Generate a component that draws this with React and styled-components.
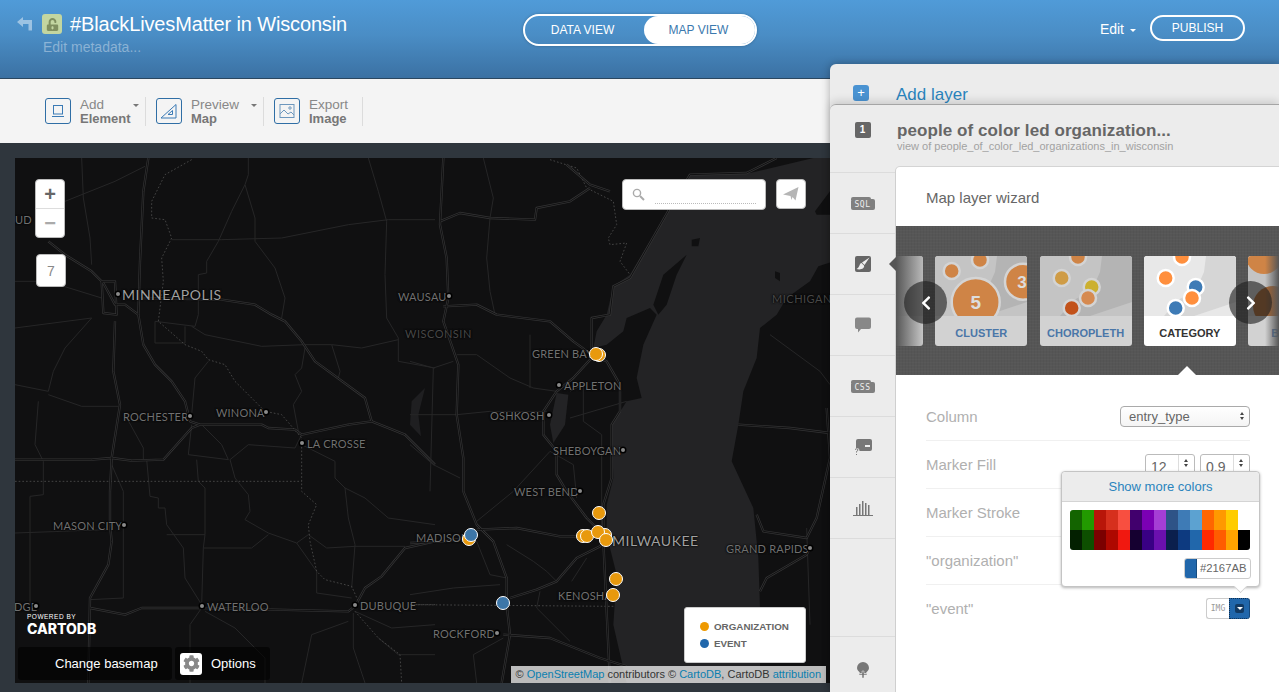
import React from "react";
import styled, { createGlobalStyle } from "styled-components";
import { FaUnlockAlt, FaCog, FaChevronLeft, FaChevronRight } from "react-icons/fa";

const GlobalStyle = createGlobalStyle`
    html, body {
        margin: 0;
        height: 692px;
        overflow: hidden;
        font-family: "Liberation Sans", Arial, sans-serif;
        background: #2f363d;
    }
    * { box-sizing: border-box; }
`;

const Page = styled.div`
    position: relative;
    width: 1279px;
    height: 692px;
    overflow: hidden;
    display: flex;
    flex-direction: column;
`;

/* ---- header ---- */
const Header = styled.header`
    height: 79px;
    flex: none;
    display: flex;
    align-items: flex-start;
    justify-content: space-between;
    background: linear-gradient(180deg, #509bd8 0%, #4a8dc5 45%, #3b71a3 100%);
    border-bottom: 1px solid #2b4760;
    color: white;
`;

const TitleBlock = styled.div`
    width: 523px;
    padding: 14px 0 0 17px;
    display: grid;
    grid-template-columns: 25px 28px 1fr;
    grid-template-rows: 20px auto;
    align-items: center;
`;

const LockBox = styled.div`
    width: 20px;
    height: 20px;
    border-radius: 3px;
    background: #c3d6a0;
    color: #80905f;
    display: flex;
    align-items: center;
    justify-content: center;
    font-size: 13px;
`;

const Title = styled.h1`
    margin: 0;
    font-size: 20px;
    font-weight: normal;
    line-height: 20px;
    letter-spacing: -0.14px;
    white-space: nowrap;
`;

const Metadata = styled.div`
    grid-column: 2 / 4;
    margin: 5px 0 0 1px;
    font-size: 14px;
    color: rgba(255, 255, 255, 0.38);
`;

const ViewSwitch = styled.div`
    margin-top: 14px;
    width: 234px;
    height: 32px;
    border: 2px solid white;
    border-radius: 16px;
    display: flex;
    font-size: 12px;
    box-shadow: 0 0 3px rgba(0, 0, 0, 0.25);
`;

const ViewTab = styled.div`
    flex: ${(p) => (p.$active ? "0 0 111px" : "1")};
    padding-right: ${(p) => (p.$active ? 2 : 4)}px;
    display: flex;
    align-items: center;
    justify-content: center;
    border-radius: 14px;
    background: ${(p) => (p.$active ? "white" : "transparent")};
    color: ${(p) => (p.$active ? "#3b79ae" : "white")};
`;

const HeaderActions = styled.div`
    width: 522px;
    padding: 15px 34px 0 0;
    display: flex;
    justify-content: flex-end;
    align-items: center;
    gap: 14px;
    font-size: 14px;
`;

const EditMenu = styled.span`
    padding-top: 2px;
`;

const Caret = styled.span`
    display: inline-block;
    width: 0;
    height: 0;
    margin-left: ${(p) => p.$gap || 0}px;
    border-left: 3px solid transparent;
    border-right: 3px solid transparent;
    border-top: 3px solid ${(p) => p.$color || "white"};
    vertical-align: middle;
`;

const Publish = styled.div`
    width: 95px;
    height: 26px;
    border: 2px solid white;
    border-radius: 13px;
    font-size: 12px;
    display: flex;
    align-items: center;
    justify-content: center;
`;

/* ---- toolbar ---- */
const Toolbar = styled.div`
    height: 64px;
    flex: none;
    background: #f4f4f4;
    display: flex;
    align-items: center;
    padding-left: 45px;
`;

const ToolItem = styled.div`
    position: relative;
    width: ${(p) => p.$width}px;
    height: 29px;
    margin-right: 10px;
    display: flex;
    align-items: center;
    gap: 9px;
    border-right: 1px solid #dcdcdc;
`;

const ToolIcon = styled.div`
    width: 26px;
    height: 26px;
    border: 1px solid #2f6ea5;
    border-radius: 3px;
    display: flex;
    align-items: center;
    justify-content: center;
`;

const ToolText = styled.div`
    padding-top: 2px;
    font-size: 13.5px;
    line-height: 14px;
    color: #888;
    strong {
        display: block;
        font-size: 13px;
        color: #777;
    }
`;

const ToolCaret = styled.div`
    position: absolute;
    right: 6px;
    top: 7px;
    line-height: 0;
`;

/* ---- map ---- */
const Stage = styled.div`
    flex: 1;
    padding: 15px 0 9px 15px;
    background: #2f363d;
`;

const MapCanvas = styled.div`
    position: relative;
    width: 815px;
    height: 525px;
    overflow: hidden;
    background: #101011;
`;

const MapArt = styled.svg`
    display: block;
    width: 815px;
    height: 525px;
`;

const MapLabel = styled.span`
    position: absolute;
    left: ${(p) => p.$x - 15}px;
    top: ${(p) => p.$y - 158}px;
    transform: translateY(-50%);
    font-family: Lato, sans-serif;
    font-size: ${(p) => p.$size || 11}px;
    letter-spacing: ${(p) => (p.$size ? 0.5 : 0.2)}px;
    color: ${(p) => p.$color || "#707070"};
    text-shadow: 0 0 2px #000, 0 0 2px #000;
    white-space: nowrap;
`;

const MapDot = styled.span`
    position: absolute;
    left: ${(p) => p.$x - 17}px;
    top: ${(p) => p.$y - 160}px;
    width: 4px;
    height: 4px;
    border-radius: 50%;
    background: #8a8a8a;
    box-shadow: 0 0 0 1.5px #000;
`;

const Marker = styled.span`
    position: absolute;
    left: ${(p) => p.$x - 22}px;
    top: ${(p) => p.$y - 165}px;
    width: 14px;
    height: 14px;
    border-radius: 50%;
    border: 1.5px solid white;
    background: ${(p) => (p.$blue ? "#3d76a8" : "#e8990d")};
`;

const ZoomControl = styled.div`
    position: absolute;
    left: 20px;
    top: 21px;
    width: 30px;
    height: 59px;
    background: white;
    border: 1px solid #bbb;
    border-radius: 4px;
    display: flex;
    flex-direction: column;
`;

const ZoomButton = styled.div`
    flex: 1;
    display: flex;
    align-items: center;
    justify-content: center;
    font-size: 20px;
    font-weight: bold;
    line-height: 1;
    color: ${(p) => (p.$muted ? "#aaa" : "#666")};
    & + & {
        border-top: 1px solid #ddd;
    }
`;

const ZoomLevel = styled.div`
    position: absolute;
    left: 21px;
    top: 96px;
    width: 30px;
    height: 33px;
    background: white;
    border: 1px solid #bbb;
    border-radius: 4px;
    display: flex;
    align-items: center;
    justify-content: center;
    font-size: 14px;
    color: #888;
`;

const SearchBox = styled.div`
    position: absolute;
    left: 607px;
    top: 21px;
    width: 144px;
    height: 31px;
    padding: 0 9px;
    background: white;
    border: 1px solid #bbb;
    border-radius: 4px;
    display: flex;
    align-items: center;
    gap: 10px;
`;

const SearchLine = styled.div`
    flex: 1;
    height: 18px;
    border-bottom: 1px dotted #bbb;
`;

const LocateButton = styled.div`
    position: absolute;
    left: 761px;
    top: 21px;
    width: 30px;
    height: 30px;
    background: white;
    border: 1px solid #bbb;
    border-radius: 4px;
    display: flex;
    align-items: center;
    justify-content: center;
`;

const Powered = styled.div`
    position: absolute;
    left: 12px;
    top: 454px;
    color: white;
    small {
        display: block;
        font-size: 6.5px;
        letter-spacing: 0.5px;
        line-height: 9px;
    }
    b {
        display: block;
        font-family: Inter, sans-serif;
        font-size: 14px;
        font-weight: 800;
        line-height: 16px;
    }
`;

const BaseBar = styled.div`
    position: absolute;
    left: 3px;
    top: 489px;
    display: flex;
    gap: 3px;
    color: white;
    font-size: 13px;
`;

const BaseButton = styled.div`
    width: ${(p) => p.$width}px;
    height: 33px;
    border-radius: 3px;
    background: rgba(0, 0, 0, 0.62);
    display: flex;
    align-items: center;
    gap: 9px;
    padding-left: ${(p) => p.$pad}px;
`;

const GearBox = styled.div`
    width: 22px;
    height: 22px;
    background: white;
    border-radius: 3px;
    color: #888;
    font-size: 17px;
    display: flex;
    align-items: center;
    justify-content: center;
`;

const Legend = styled.div`
    position: absolute;
    left: 669px;
    top: 449px;
    width: 122px;
    height: 56px;
    padding: 13px 15px 0;
    background: white;
    border: 1px solid #ccc;
    border-radius: 3px;
    display: flex;
    flex-direction: column;
    gap: 6px;
`;

const LegendRow = styled.div`
    display: flex;
    align-items: center;
    gap: 5px;
    height: 11px;
    font-size: 9.8px;
    font-weight: bold;
    color: #666;
`;

const LegendDot = styled.span`
    width: 9px;
    height: 9px;
    border-radius: 50%;
    background: ${(p) => p.$color};
`;

const Attribution = styled.div`
    position: absolute;
    right: 4px;
    bottom: 0;
    height: 17px;
    padding: 0 5px;
    background: rgba(255, 255, 255, 0.72);
    font-size: 11px;
    line-height: 17px;
    color: #333;
    white-space: nowrap;
    a {
        color: #0a7fb0;
        text-decoration: none;
    }
`;

/* ---- right panel ---- */
const Panel = styled.aside`
    position: absolute;
    left: 830px;
    top: 64px;
    width: 449px;
    height: 628px;
    background: #ececec;
    border-top-left-radius: 6px;
    box-shadow: 0 0 8px rgba(0, 0, 0, 0.3);
    display: flex;
    flex-direction: column;
`;

const AddLayer = styled.div`
    height: 40px;
    flex: none;
    display: flex;
    align-items: flex-start;
    padding: 21px 0 0 23px;
    font-size: 17px;
    line-height: 20px;
    color: #2a84bd;
`;

const AddIcon = styled.div`
    width: 16px;
    height: 16px;
    margin-right: 27px;
    border-radius: 3px;
    background: #4a93d2;
    color: white;
    font-size: 13px;
    line-height: 16px;
    text-align: center;
`;

const LayerCard = styled.div`
    flex: 1;
    display: flex;
    background: #ececec;
    border-top: 1px solid #a5a5a5;
    border-top-left-radius: 6px;
    box-shadow: 0 -3px 8px rgba(0, 0, 0, 0.14);
`;

const Rail = styled.nav`
    position: relative;
    width: 65px;
    flex: none;
    display: flex;
    flex-direction: column;
`;

const RailRow = styled.div`
    height: ${(p) => p.$height || 61}px;
    flex: ${(p) => (p.$grow ? 1 : "none")};
    display: flex;
    justify-content: center;
    align-items: ${(p) => (p.$top ? "flex-start" : "center")};
    padding-top: ${(p) => p.$top || 0}px;
    border-bottom: ${(p) => (p.$last ? "none" : "1px solid #dcdcdc")};
`;

const NumberBadge = styled.div`
    width: 16px;
    height: 16px;
    border-radius: 2px;
    background: #666;
    color: white;
    font-size: 10px;
    font-weight: bold;
    line-height: 16px;
    text-align: center;
`;

const CodeBadge = styled.div`
    position: relative;
    width: 24px;
    height: 11px;
    margin-top: 2px;
    border-radius: 2px;
    background: #808080;
    color: #eee;
    font-family: "DejaVu Sans Mono", monospace;
    font-size: 8px;
    letter-spacing: 0.5px;
    line-height: 11px;
    text-align: center;
    &::before {
        content: "";
        position: absolute;
        left: 0;
        top: -2px;
        width: 20px;
        height: 3px;
        border-radius: 2px 2px 0 0;
        background: #808080;
    }
`;

const RailPointer = styled.div`
    position: absolute;
    right: -1px;
    top: 152px;
    z-index: 2;
    width: 0;
    height: 0;
    border-top: 7px solid transparent;
    border-bottom: 7px solid transparent;
    border-right: 7px solid #565656;
`;

const LayerMain = styled.div`
    flex: 1;
    min-width: 0;
    display: flex;
    flex-direction: column;
`;

const LayerHead = styled.div`
    height: 61px;
    flex: none;
    padding: 16px 0 0 2px;
`;

const LayerName = styled.div`
    font-size: 17px;
    font-weight: bold;
    line-height: 19px;
    letter-spacing: 0.08px;
    color: #666;
`;

const LayerSub = styled.div`
    font-size: 11px;
    line-height: 13px;
    color: #a2a2a2;
`;

const Wizard = styled.section`
    flex: 1;
    position: relative;
    background: white;
    border-top: 1px solid #d4d4d4;
    border-left: 1px solid #cfcfcf;
    border-top-left-radius: 5px;
    display: flex;
    flex-direction: column;
`;

const WizardTitle = styled.div`
    height: 59px;
    flex: none;
    padding: 2px 0 0 30px;
    display: flex;
    align-items: center;
    font-size: 15px;
    color: #666;
`;

const Carousel = styled.div`
    position: relative;
    height: 149px;
    flex: none;
    overflow: hidden;
    padding-top: 30px;
    background:
        repeating-linear-gradient(0deg, rgba(255, 255, 255, 0.02) 0 1px, transparent 1px 3px),
        repeating-linear-gradient(90deg, rgba(0, 0, 0, 0.04) 0 1px, transparent 1px 3px),
        #565656;
`;

const CarouselTrack = styled.div`
    display: flex;
    gap: 12.3px;
    margin-left: -65px;
`;

const TypeCard = styled.div`
    width: 92px;
    height: 90px;
    flex: none;
    overflow: hidden;
    border-radius: 3px;
    background: ${(p) => (p.$active ? "white" : "#d2d2d2")};
`;

const TypeThumb = styled.svg`
    display: block;
    width: 92px;
    height: 60px;
`;

const TypeLabel = styled.div`
    height: 30px;
    overflow: hidden;
    text-align: center;
    font-size: 11px;
    font-weight: bold;
    line-height: 34px;
    color: ${(p) => (p.$active ? "#333" : "#4a76a8")};
`;

const CarouselFade = styled.div`
    position: absolute;
    top: 30px;
    height: 90px;
    width: ${(p) => (p.$right ? 14 : 30)}px;
    ${(p) => (p.$right ? "right: 0;" : "left: 0;")}
    background: linear-gradient(${(p) => (p.$right ? "270deg" : "90deg")}, #565656, rgba(86, 86, 86, 0));
`;

const CarouselArrow = styled.div`
    position: absolute;
    top: 55px;
    ${(p) => (p.$right ? "right: 7px;" : "left: 8px;")}
    width: 43px;
    height: 43px;
    border-radius: 50%;
    background: rgba(30, 30, 30, 0.62);
    color: white;
    font-size: 16px;
    display: flex;
    align-items: center;
    justify-content: center;
`;

const ActiveNotch = styled.div`
    position: absolute;
    left: 282px;
    bottom: 0;
    width: 0;
    height: 0;
    border-left: 9px solid transparent;
    border-right: 9px solid transparent;
    border-bottom: 9px solid white;
`;

const WizardForm = styled.div`
    position: relative;
    flex: 1;
    padding: 18px 29px 0 30px;
`;

const FormRow = styled.div`
    height: 48px;
    display: flex;
    align-items: center;
    justify-content: space-between;
    border-bottom: ${(p) => (p.$last ? "none" : "1px solid #f0f0f0")};
    font-size: 15px;
    color: #b0b0b0;
    padding-bottom: 1px;
`;

const SelectBox = styled.div`
    width: 130px;
    height: 21px;
    padding: 0 5px 0 8px;
    border: 1px solid #aaa;
    border-radius: 4px;
    background: linear-gradient(#fff, #f4f4f4);
    display: flex;
    align-items: center;
    justify-content: space-between;
    font-size: 13px;
    color: #666;
`;

const UpDown = styled.span`
    display: flex;
    flex-direction: column;
    gap: 2px;
    &::before, &::after {
        content: "";
        width: 0;
        height: 0;
        border-left: 2.5px solid transparent;
        border-right: 2.5px solid transparent;
    }
    &::before { border-bottom: 3px solid #444; }
    &::after { border-top: 3px solid #444; }
`;

const Steppers = styled.div`
    display: flex;
    gap: 5px;
    align-self: flex-start;
    margin-top: 13px;
`;

const Stepper = styled.div`
    width: 50px;
    height: 24px;
    border: 1px solid #bbb;
    border-radius: 3px;
    display: flex;
    font-size: 14px;
    line-height: 24px;
    color: #666;
    span:first-child {
        flex: 1;
        padding-left: 5px;
    }
`;

const StepperSide = styled.div`
    width: 16px;
    border-left: 1px solid #ddd;
    display: flex;
    justify-content: center;
    padding-top: 4px;
`;

const ColorPopup = styled.div`
    position: absolute;
    left: 165px;
    top: 96px;
    width: 199px;
    height: 116px;
    background: white;
    border: 1px solid #c4c4c4;
    border-radius: 4px;
    box-shadow: 0 1px 3px rgba(0, 0, 0, 0.3);
    &::after {
        content: "";
        position: absolute;
        right: 12px;
        bottom: -7px;
        width: 12px;
        height: 12px;
        background: white;
        border-right: 1px solid #ccc;
        border-bottom: 1px solid #ccc;
        transform: rotate(45deg) scale(0.7);
    }
`;

const PopupHead = styled.div`
    height: 30px;
    background: #ececec;
    border-bottom: 1px solid #d4d4d4;
    border-radius: 4px 4px 0 0;
    text-align: center;
    font-size: 13px;
    line-height: 30px;
    color: #2a84bd;
`;

const Palette = styled.div`
    margin: 8px 0 0 8px;
    width: 180px;
    display: grid;
    grid-template-columns: repeat(15, 12px);
    grid-auto-rows: 20px;
    border-radius: 3px;
    overflow: hidden;
`;

const Swatch = styled.span`
    background: ${(p) => p.$color};
`;

const HexField = styled.div`
    margin: 8px 0 0 122px;
    width: 67px;
    height: 21px;
    border: 1px solid #ccc;
    border-radius: 3px;
    overflow: hidden;
    display: flex;
    font-size: 11.3px;
    line-height: 19px;
    color: #666;
    span:last-child {
        padding-left: 3px;
    }
`;

const HexChip = styled.span`
    width: 12px;
    flex: none;
    background: #2167ab;
    border-right: 1px solid #174d80;
`;

const ImgPicker = styled.div`
    display: flex;
    width: 44px;
    height: 21px;
`;

const ImgButton = styled.div`
    width: 23px;
    border: 1px solid #ccc;
    border-right: none;
    border-radius: 3px 0 0 3px;
    font-family: "DejaVu Sans Mono", monospace;
    font-size: 8px;
    line-height: 19px;
    text-align: center;
    color: #999;
`;

const ColorButton = styled.div`
    flex: 1;
    background: #2167ab;
    border: 1px dotted #0c2d4f;
    border-radius: 0 3px 3px 0;
    display: flex;
    align-items: center;
    justify-content: center;
`;

const CaretChip = styled.span`
    width: 9px;
    height: 9px;
    border-radius: 2px;
    background: #123a63;
    display: flex;
    align-items: center;
    justify-content: center;
`;

/* ---- map data, in 3x map coordinates ---- */
const leftHighways = [
    "100,250 150,290 230,340 265,375 300,440 330,440 370,470 385,560 420,620 470,670 510,730 525,790 555,800 740,800 760,810 840,815 860,830 1000,800 1070,790",
    "1070,790 1050,720 900,610 860,550 810,490 770,470 720,440 620,425 380,420",
    "300,490 295,640 315,740 290,900 285,1000 285,1100 290,1150 280,1220 225,1320 220,1575",
    "0,905 230,905 290,900 350,908 445,905 530,810 555,800",
    "1070,790 1170,830 1260,920",
    "400,0 385,100 375,310 370,470",
    "225,1350 330,1370 380,1350 560,1350 1000,1360 1020,1345",
    "260,370 300,370 305,470 265,465 260,370",
    "1020,1345 1050,1290 1100,1255 1170,1170 1260,1150",
];

const leftRoads = [
    "150,130 300,70 390,25",
    "200,0 205,120 225,240 230,320",
    "0,370 70,370 130,380 260,420",
    "470,245 620,245 800,240 1000,200 1120,185 1260,185",
    "700,0 700,50 690,80 650,160 610,250 575,310 575,345 550,350 550,470 540,505 420,490 420,555 510,555 510,505",
    "690,80 720,180 720,250 780,330 810,420 800,480",
    "1060,0 1090,100 1115,190 1110,350 1115,480 1150,540 1150,610 1260,630",
    "530,505 570,530 740,565 870,560 950,560 1040,570 1150,545",
    "950,560 975,640 970,660",
    "870,570 860,630 840,650 860,700 835,740 850,820",
    "0,510 230,480 150,570 115,640 100,700 0,680",
    "100,710 200,745 310,745",
    "70,730 60,860 85,910 85,1010 45,1015 45,1340",
    "580,610 540,660 530,770",
    "530,800 520,890 640,905 620,860 560,800",
    "645,905 700,860 840,870 860,830",
    "645,905 660,960 700,1010 705,1060 690,1085 760,1125 845,1155 880,1130 935,1170 1020,1165 1170,1165",
    "860,860 960,910 960,960 990,990 1050,1020 1120,1080 1260,1100",
    "990,990 1000,1080 1020,1160 1010,1290",
    "395,905 405,1015 430,1020 430,1050 450,1050 455,1100 505,1170 510,1260 560,1340",
    "545,905 550,970 570,990 570,1130 565,1170 560,1340",
    "565,1170 710,1170 760,1130",
    "0,1125 280,1115",
    "455,1130 570,1130",
    "290,920 325,1000 325,1320 225,1325",
    "330,770 385,870 385,905",
    "845,1155 905,1240 905,1305 1010,1320",
    "560,1350 525,1400 525,1575",
    "570,1360 660,1410 750,1500 750,1575",
    "1015,1365 1015,1470 1050,1575",
    "1020,1360 1130,1410 1260,1400",
    "860,1575 890,1430 1000,1390",
    "1090,1440 1150,1490 1260,1490",
];

const leftDotted = [
    "530,5 450,50 410,130 410,180 450,185 470,240 440,300 445,370 430,490 510,560 560,580 580,605 630,620 660,670 750,760 800,770 860,840 860,1000 905,1040 880,1100 885,1150 905,1240 930,1265 1010,1285 1030,1330",
    "0,970 860,970",
    "1020,1360 1090,1440 1155,1490 1160,1575",
    "1190,1340 1260,1340",
];

const rightHighways = [
    "100,0 90,200 110,300 115,420 100,490 145,620 140,770 160,900 160,1000 200,1100 250,1150 290,1260 290,1340 300,1430 275,1575",
    "90,190 150,165 240,180 375,185 380,150 480,130 540,90",
    "470,20 540,80 600,100",
    "100,445 200,440 260,470 420,490 490,550 545,590 545,480 600,470 610,385 660,360 780,150 840,50 1010,45 1100,0",
    "545,590 590,610 630,680 630,760 605,800 605,960 580,1040 580,1150 600,1575",
    "545,600 490,660 440,700 400,760 400,830 440,880 440,950 470,1000 530,1080 580,1130",
    "200,1115 320,1110 450,1135 510,1135",
    "0,1155 100,1150 170,1140",
    "300,1320 380,1295 440,1270 500,1200 570,1165 580,1150",
    "280,1430 420,1440 570,1500 650,1525",
    "1040,1070 1060,1120 1190,1140 1220,1080 1260,900 1250,750",
    "985,800 1140,810 1260,825",
    "1050,1300 1070,1260 1190,1190 1200,1170",
];

const rightRoads = [
    "220,0 250,120 240,180 230,300 240,400 255,470",
    "0,610 70,630 130,610",
    "70,630 60,1000",
    "140,590 200,590 300,660 370,690 440,700",
    "360,530 360,690",
    "0,770 140,770 240,760 410,760",
    "0,860 70,920 150,960",
    "480,700 520,680 520,790 575,830 575,1150",
    "480,780 650,730",
    "200,1090 310,1000 420,880 490,920 500,1020",
    "200,1150 240,1250 290,1260",
    "290,1160 370,1210 410,1240 440,1270",
    "485,1270 530,1200",
    "390,1300 380,1350 480,1450",
    "0,1310 130,1290 270,1280",
    "200,1575 190,1490 280,1440",
    "1080,530 1230,640 1260,680",
    "1190,1110 1200,1400",
];

const rightDotted = [
    "420,5 500,30 530,90 610,130 620,200 595,240 600,260 650,255 630,310 660,350",
    "0,1340 610,1345",
];

const lakeShape =
    "780,150 840,50 1020,45 1210,0 1300,0 1300,300 1225,325 1200,370 1130,420 1100,470 1050,510 1040,600 1000,700 985,800 965,910 1030,1050 1045,1200 1050,1350 1050,1575 650,1575 610,1400 620,1250 590,1130 590,1040 610,960 605,800 650,730 695,720 680,660 700,560 740,470 720,450 650,480 640,520 590,560 550,570 560,520 590,470 610,385 660,350";

const islands = [
    "730,440 760,350 830,290 800,350 770,440 745,470",
    "845,245 870,240 865,265 845,265",
    "1095,340 1110,345 1110,370 1095,360",
    "1215,160 1260,100 1260,170 1220,170",
];

const labels = [
    { text: "MINNEAPOLIS", x: 122, y: 294, size: 14, color: "#a0a0a0", dot: 118 },
    { text: "WAUSAU", x: 398, y: 296, dot: 449 },
    { text: "WISCONSIN", x: 405, y: 333, size: 11, color: "#484848" },
    { text: "MICHIGAN", x: 772, y: 298, size: 11, color: "#484848" },
    { text: "GREEN BAY", x: 532, y: 353 },
    { text: "APPLETON", x: 564, y: 385, dot: 559 },
    { text: "ROCHESTER", x: 123, y: 416, dot: 190 },
    { text: "WINONA", x: 216, y: 412, dot: 266 },
    { text: "OSHKOSH", x: 490, y: 415, dot: 549 },
    { text: "LA CROSSE", x: 307, y: 443, dot: 302 },
    { text: "SHEBOYGAN", x: 553, y: 450, dot: 623 },
    { text: "WEST BEND", x: 514, y: 491, dot: 580 },
    { text: "MILWAUKEE", x: 612, y: 540, size: 14, color: "#a0a0a0" },
    { text: "MADISON", x: 416, y: 537 },
    { text: "GRAND RAPIDS", x: 726, y: 548, dot: 810 },
    { text: "MASON CITY", x: 53, y: 525, dot: 124 },
    { text: "UD", x: 15, y: 219 },
    { text: "DGE", x: 14, y: 606, dot: 36 },
    { text: "WATERLOO", x: 207, y: 606, dot: 202 },
    { text: "DUBUQUE", x: 360, y: 605, dot: 355 },
    { text: "KENOSHA", x: 558, y: 595 },
    { text: "ROCKFORD", x: 433, y: 633, dot: 497 },
];

const markers = [
    { x: 599.3, y: 355.3 },
    { x: 595.7, y: 353.7 },
    { x: 599, y: 513 },
    { x: 583, y: 536 },
    { x: 586.7, y: 536.3 },
    { x: 605, y: 534.7 },
    { x: 597.7, y: 532 },
    { x: 605.7, y: 539.7 },
    { x: 615.7, y: 579.3 },
    { x: 613, y: 594.7 },
    { x: 469.3, y: 539 },
    { x: 471, y: 534.7, blue: true },
    { x: 503, y: 603, blue: true },
];

const paletteColors = [
    "#136400", "#229a00", "#b81609", "#d6301d", "#f84f40", "#41006d", "#7b00b4", "#a53ed5",
    "#2e5387", "#3e7bb6", "#5ca2d1", "#ff6600", "#ff9900", "#ffcc00", "#ffffff",
    "#032000", "#0d4f00", "#7a0000", "#ae0800", "#f11810", "#150030", "#390084", "#6b10ae",
    "#0b1f4d", "#0d3a80", "#2167ab", "#ff2900", "#ff5c00", "#ffa300", "#000000",
];

const Lines = ({ points, color, width, dash }) =>
    points.map((p) => (
        <polyline
            key={p}
            points={p}
            fill="none"
            stroke={color}
            strokeWidth={width}
            strokeDasharray={dash}
            strokeLinejoin="round"
        />
    ));

const MapRoads = ({ highways, roads, dotted }) => (
    <>
        <Lines points={roads} color="#262627" width={3} />
        <Lines points={dotted} color="#444" width={3} dash="5 6" />
        <Lines points={highways} color="#343435" width={7} />
        <Lines points={highways} color="#111112" width={3} />
    </>
);

const BaseMap = () => (
    <MapArt viewBox="0 0 2445 1575">
        <polygon points="1190,730 1230,690 1210,770 1218,835 1185,800" fill="#1f1f21" />
        <MapRoads highways={leftHighways} roads={leftRoads} dotted={leftDotted} />
        <g transform="translate(1185 0)">
            <polygon points={lakeShape} fill="#232325" />
            {islands.map((p) => (
                <polygon key={p} points={p} fill="#101011" />
            ))}
            <polygon points="440,705 475,710 465,800 430,855 420,800" fill="#232325" />
            <MapRoads highways={rightHighways} roads={rightRoads} dotted={rightDotted} />
        </g>
    </MapArt>
);

const thumbMap = "M62 0 L92 0 L92 46 L50 60 L20 60 L34 44 L52 34 L60 16 Z";

const ThumbCircle = ({ cx, cy, r, fill, ring }) => (
    <circle cx={cx} cy={cy} r={r} fill={fill} stroke={ring} strokeWidth="2.5" />
);

const TypeThumbnail = ({ kind }) => {
    if (kind === "cluster") {
        return (
            <TypeThumb viewBox="0 0 92 60">
                <rect width="92" height="60" fill="#c4c4c4" />
                <path d={thumbMap} fill="#b4b4b4" />
                <ThumbCircle cx={16.7} cy={15} r={8} fill="#cf8446" ring="#d4d4d4" />
                <ThumbCircle cx={45} cy={4} r={8} fill="#cf8446" ring="#d4d4d4" />
                <ThumbCircle cx={40.7} cy={46} r={24} fill="#cf8446" ring="#d4d4d4" />
                <ThumbCircle cx={88} cy={25.7} r={18} fill="#cf8446" ring="#d4d4d4" />
                <text x="40.7" y="53" textAnchor="middle" fontSize="19" fontWeight="bold" fill="#ddd">5</text>
                <text x="87" y="32" textAnchor="middle" fontSize="17" fontWeight="bold" fill="#ddd">3</text>
            </TypeThumb>
        );
    }
    if (kind === "bubble") {
        return (
            <TypeThumb viewBox="0 0 92 60">
                <rect width="92" height="60" fill="#c4c4c4" />
                <circle cx="16" cy="0" r="18" fill="#cf8446" />
                <circle cx="25" cy="50" r="20" fill="#a8642f" />
            </TypeThumb>
        );
    }
    const active = kind === "category";
    const fills = active
        ? ["#ff8f3d", "#ff8f3d", "#3e7bb6", "#ff8f3d", "#3e7bb6"]
        : ["#cf9c46", "#cf8446", "#ccb030", "#d68a50", "#c2521a"];
    const ring = active ? "#fff" : "#d4d4d4";
    return (
        <TypeThumb viewBox="0 0 92 60">
            <rect width="92" height="60" fill={active ? "#e8e8e8" : "#c4c4c4"} />
            <path d={thumbMap} fill={active ? "#d6d6d6" : "#b4b4b4"} />
            <ThumbCircle cx={21.7} cy={22} r={8} fill={fills[0]} ring={ring} />
            <ThumbCircle cx={38} cy={1} r={8} fill={fills[1]} ring={ring} />
            <ThumbCircle cx={51.7} cy={31} r={8} fill={fills[2]} ring={ring} />
            <ThumbCircle cx={48} cy={42} r={8} fill={fills[3]} ring={ring} />
            <ThumbCircle cx={31.7} cy={52} r={8} fill={fills[4]} ring={ring} />
        </TypeThumb>
    );
};

const App = () => (
    <Page>
        <GlobalStyle />
        <Header>
            <TitleBlock>
                <svg width="15" height="14" viewBox="0 0 15 14" fill="rgba(255,255,255,0.45)">
                    <path d="M0 5 L6 0 V3 H15 V13.5 H11.5 V7 H6 V10 Z" />
                </svg>
                <LockBox><FaUnlockAlt /></LockBox>
                <Title>#BlackLivesMatter in Wisconsin</Title>
                <Metadata>Edit metadata...</Metadata>
            </TitleBlock>
            <ViewSwitch>
                <ViewTab>DATA VIEW</ViewTab>
                <ViewTab $active>MAP VIEW</ViewTab>
            </ViewSwitch>
            <HeaderActions>
                <EditMenu>Edit<Caret $gap={6} /></EditMenu>
                <Publish>PUBLISH</Publish>
            </HeaderActions>
        </Header>

        <Toolbar>
            <ToolItem $width={101}>
                <ToolIcon>
                    <svg width="14" height="14" viewBox="0 0 14 14" fill="none" stroke="#3a7ab5">
                        <rect x="2.5" y="1.5" width="9" height="8.5" />
                        <path d="M1 12.5h12" />
                    </svg>
                </ToolIcon>
                <ToolText>Add<strong>Element</strong></ToolText>
                <ToolCaret><Caret $color="#777" /></ToolCaret>
            </ToolItem>
            <ToolItem $width={108}>
                <ToolIcon>
                    <svg width="18" height="16" viewBox="0 0 18 16" fill="none" stroke="#3a7ab5">
                        <path d="M1 15 L16 1.5 V15 Z M8 11.5 H12.5 V7.5 Z" />
                    </svg>
                </ToolIcon>
                <ToolText>Preview<strong>Map</strong></ToolText>
                <ToolCaret><Caret $color="#777" /></ToolCaret>
            </ToolItem>
            <ToolItem $width={89}>
                <ToolIcon>
                    <svg width="16" height="16" viewBox="0 0 16 16" fill="none" stroke="#6d97bd">
                        <rect x="1" y="1.5" width="14" height="13" />
                        <path d="M1 11 L5 7 L9 11 L12 9 L15 12" />
                        <circle cx="11" cy="5" r="1.2" />
                    </svg>
                </ToolIcon>
                <ToolText>Export<strong>Image</strong></ToolText>
            </ToolItem>
        </Toolbar>

        <Stage>
            <MapCanvas>
                <BaseMap />
                {labels.map((l) => (
                    <React.Fragment key={l.text}>
                        <MapLabel $x={l.x} $y={l.y} $size={l.size} $color={l.color}>{l.text}</MapLabel>
                        {l.dot && <MapDot $x={l.dot} $y={l.y} />}
                    </React.Fragment>
                ))}
                {markers.map((m) => (
                    <Marker key={`${m.x}-${m.y}`} $x={m.x} $y={m.y} $blue={m.blue} />
                ))}

                <ZoomControl>
                    <ZoomButton>+</ZoomButton>
                    <ZoomButton $muted>−</ZoomButton>
                </ZoomControl>
                <ZoomLevel>7</ZoomLevel>

                <SearchBox>
                    <svg width="13" height="13" viewBox="0 0 13 13" fill="none" stroke="#aaa">
                        <circle cx="5" cy="5" r="3.6" strokeWidth="1.4" />
                        <path d="M8 8 L12 12" strokeWidth="2" />
                    </svg>
                    <SearchLine />
                </SearchBox>
                <LocateButton>
                    <svg width="16" height="14" viewBox="0 0 16 14" fill="#b5b5b5">
                        <path d="M0 7.5 L15.5 0 L12.5 13.5 L9.5 10 L8.5 13 L7.5 9 Z" />
                    </svg>
                </LocateButton>

                <Powered>
                    <small>POWERED BY</small>
                    <b>CARTODB</b>
                </Powered>
                <BaseBar>
                    <BaseButton $width={154} $pad={37}>Change basemap</BaseButton>
                    <BaseButton $width={95} $pad={5}>
                        <GearBox><FaCog /></GearBox>
                        Options
                    </BaseButton>
                </BaseBar>

                <Legend>
                    <LegendRow><LegendDot $color="#ee9900" />ORGANIZATION</LegendRow>
                    <LegendRow><LegendDot $color="#2167ab" />EVENT</LegendRow>
                </Legend>
                <Attribution>
                    © <a>OpenStreetMap</a> contributors © <a>CartoDB</a>, CartoDB <a>attribution</a>
                </Attribution>
            </MapCanvas>
        </Stage>

        <Panel>
            <AddLayer>
                <AddIcon>+</AddIcon>
                Add layer
            </AddLayer>
            <LayerCard>
                <Rail>
                    <RailRow $height={68} $top={17}><NumberBadge>1</NumberBadge></RailRow>
                    <RailRow><CodeBadge>SQL</CodeBadge></RailRow>
                    <RailRow>
                        <svg width="16" height="16" viewBox="0 0 16 16">
                            <rect width="16" height="16" rx="2" fill="#666" />
                            <path d="M14.5 1.5 L7 6.5 L9.5 9 Z M6.5 7 C4 7.5 5 11.5 1.5 13 C6 14.5 10 12 9 9.5 Z" fill="#eee" />
                        </svg>
                    </RailRow>
                    <RailRow>
                        <svg width="16" height="16" viewBox="0 0 16 16" fill="#888">
                            <path d="M2 0.5 H14 A2 2 0 0 1 16 2.5 V10 A2 2 0 0 1 14 12 H6 L3 15.5 V12 H2 A2 2 0 0 1 0 10 V2.5 A2 2 0 0 1 2 0.5 Z" />
                        </svg>
                    </RailRow>
                    <RailRow><CodeBadge>CSS</CodeBadge></RailRow>
                    <RailRow>
                        <svg width="18" height="16" viewBox="0 0 18 16">
                            <rect x="2" y="0" width="16" height="12" rx="2" fill="#777" />
                            <rect x="11" y="6" width="5" height="2" fill="#eee" />
                            <circle cx="2.5" cy="12" r="3" fill="#ececec" />
                            <path d="M1 10.5 Q2.5 9 4 10.5 Q4 12 2.5 12.5 V13.5 M2.5 15 V16" fill="none" stroke="#777" />
                        </svg>
                    </RailRow>
                    <RailRow>
                        <svg width="20" height="16" viewBox="0 0 20 16" fill="#777">
                            <rect x="3" y="7" width="1.5" height="8" />
                            <rect x="6" y="4" width="1.5" height="11" />
                            <rect x="9" y="1" width="1.5" height="14" />
                            <rect x="12" y="3" width="1.5" height="12" />
                            <rect x="15" y="5" width="1.5" height="10" />
                            <rect x="0" y="15" width="20" height="1" />
                        </svg>
                    </RailRow>
                    <RailRow $grow $height={0} />
                    <RailRow $height={55} $top={25} $last>
                        <svg width="12" height="16" viewBox="0 0 12 16" fill="#777">
                            <path d="M6 0 A6 6 0 0 1 12 6 C12 8 10 9.5 9 11 H3 C2 9.5 0 8 0 6 A6 6 0 0 1 6 0 Z" />
                            <path d="M5 9 H7 V11.5 H10 V13 H7 V16 H5 V13 H2 V11.5 H5 Z" stroke="#ececec" strokeWidth="0.5" />
                        </svg>
                    </RailRow>
                    <RailPointer />
                </Rail>
                <LayerMain>
                    <LayerHead>
                        <LayerName>people of color led organization...</LayerName>
                        <LayerSub>view of people_of_color_led_organizations_in_wisconsin</LayerSub>
                    </LayerHead>
                    <Wizard>
                        <WizardTitle>Map layer wizard</WizardTitle>
                        <Carousel>
                            <CarouselTrack>
                                <TypeCard>
                                    <TypeThumbnail kind="bubble" />
                                    <TypeLabel>SIMPLE</TypeLabel>
                                </TypeCard>
                                <TypeCard>
                                    <TypeThumbnail kind="cluster" />
                                    <TypeLabel>CLUSTER</TypeLabel>
                                </TypeCard>
                                <TypeCard>
                                    <TypeThumbnail kind="choropleth" />
                                    <TypeLabel>CHOROPLETH</TypeLabel>
                                </TypeCard>
                                <TypeCard $active>
                                    <TypeThumbnail kind="category" />
                                    <TypeLabel $active>CATEGORY</TypeLabel>
                                </TypeCard>
                                <TypeCard>
                                    <TypeThumbnail kind="bubble" />
                                    <TypeLabel>BUBBLE</TypeLabel>
                                </TypeCard>
                            </CarouselTrack>
                            <CarouselFade />
                            <CarouselFade $right />
                            <CarouselArrow><FaChevronLeft /></CarouselArrow>
                            <CarouselArrow $right><FaChevronRight /></CarouselArrow>
                            <ActiveNotch />
                        </Carousel>
                        <WizardForm>
                            <FormRow>
                                Column
                                <SelectBox>entry_type<UpDown /></SelectBox>
                            </FormRow>
                            <FormRow>
                                Marker Fill
                                <Steppers>
                                    <Stepper><span>12</span><StepperSide><UpDown /></StepperSide></Stepper>
                                    <Stepper><span>0.9</span><StepperSide><UpDown /></StepperSide></Stepper>
                                </Steppers>
                            </FormRow>
                            <FormRow>Marker Stroke</FormRow>
                            <FormRow>"organization"</FormRow>
                            <FormRow $last>
                                "event"
                                <ImgPicker>
                                    <ImgButton>IMG</ImgButton>
                                    <ColorButton>
                                        <CaretChip><Caret /></CaretChip>
                                    </ColorButton>
                                </ImgPicker>
                            </FormRow>
                            <ColorPopup>
                                <PopupHead>Show more colors</PopupHead>
                                <Palette>
                                    {paletteColors.map((c) => (
                                        <Swatch key={c} $color={c} />
                                    ))}
                                </Palette>
                                <HexField>
                                    <HexChip />
                                    <span>#2167AB</span>
                                </HexField>
                            </ColorPopup>
                        </WizardForm>
                    </Wizard>
                </LayerMain>
            </LayerCard>
        </Panel>
    </Page>
);

export default App;
